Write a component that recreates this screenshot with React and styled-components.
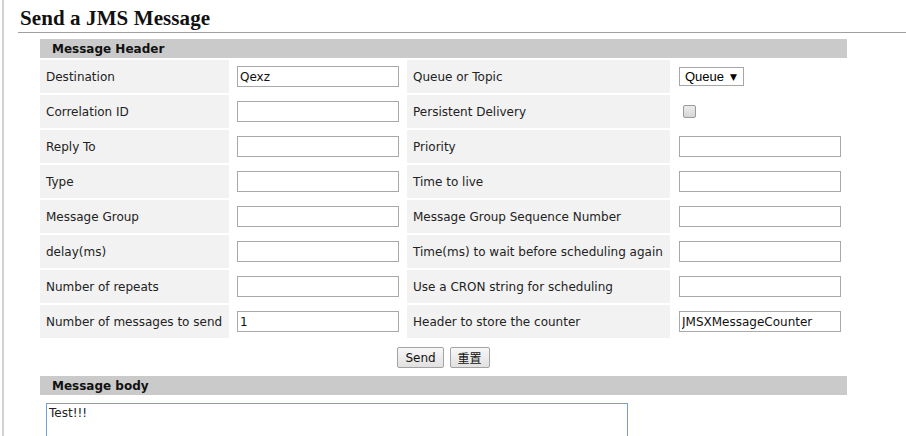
import React from "react";
import styled, { createGlobalStyle } from "styled-components";

const Global = createGlobalStyle`
  html, body { margin: 0; padding: 0; overflow: hidden; background: #fff; }
  body { font-family: "DejaVu Sans", Verdana, sans-serif; font-size: 12px; color: #222; }
`;

const Page = styled.div`
  padding-left: 2px;
  height: 436px;
  overflow: hidden;
`;

const Frame = styled.div`
  border-left: 2px solid #d2d2d2;
  height: 100%;
  padding-left: 14px;
`;

const Title = styled.h1`
  margin: 0;
  padding: 6px 0 2px 2px;
  font-family: "Liberation Serif", Georgia, serif;
  font-weight: bold;
  font-size: 21px;
  letter-spacing: 0.1px;
  line-height: 24px;
  color: #111;
  border-bottom: 1px solid #a0a0a0;
`;

const Section = styled.div`
  margin-left: 20px;
  width: 807px;
  padding: 2px;
  display: grid;
  grid-template-columns: 189px 174px 263px 175px;
  gap: 2px;
  margin-top: ${(p) => p.$top || 0}px;
`;

const Bar = styled.div`
  grid-column: 1 / -1;
  height: 19px;
  background: #cacaca;
  padding-left: 12px;
  font-weight: bold;
  font-size: 12px;
  line-height: 20px;
  color: #111;
`;

const Label = styled.div`
  height: 33px;
  background: #f2f2f2;
  display: flex;
  align-items: center;
  padding-left: 6px;
  white-space: nowrap;
`;

const Value = styled.div`
  height: 33px;
  display: flex;
  align-items: center;
  padding-left: ${(p) => p.$pad || 6}px;
`;

const TextInput = styled.input`
  box-sizing: border-box;
  width: 162px;
  height: 21px;
  border: 1px solid #a9a9a9;
  padding: 0 2px;
  margin: 0;
  font-family: "DejaVu Sans", Verdana, sans-serif;
  font-size: 12px;
  color: #111;
  outline: none;
`;

const SelectBox = styled.div`
  box-sizing: border-box;
  display: flex;
  align-items: center;
  width: 65px;
  height: 19px;
  border: 1px solid #a6a6a6;
  padding: 0 6px 0 5px;
  background: #fff;
`;

const NativeSelect = styled.select`
  appearance: none;
  border: none;
  padding: 0;
  margin: 0;
  flex: 1;
  background: transparent;
  font-family: "Liberation Sans", Arial, sans-serif;
  font-size: 13px;
  color: #000;
  outline: none;
`;

const Arrow = styled.span`
  font-size: 9px;
  color: #000;
  font-family: "DejaVu Sans", sans-serif;
`;

const Check = styled.input`
  appearance: none;
  box-sizing: border-box;
  width: 13px;
  height: 13px;
  margin: 3px 3px 3px 4px;
  border: 1px solid #9a9a9a;
  border-radius: 2px;
  background: linear-gradient(#ececec, #d6d6d6);
`;

const Actions = styled.div`
  grid-column: 1 / -1;
  height: 33px;
  display: flex;
  align-items: center;
  justify-content: center;
  gap: 6px;
  padding-top: 2px;
  box-sizing: border-box;
`;

const Button = styled.button`
  box-sizing: border-box;
  height: 21px;
  padding: 0 ${(p) => p.$px || 7}px;
  border: 1px solid #a3a3a3;
  border-radius: 2px;
  background: linear-gradient(#f7f7f7, #e1e1e1);
  font-family: "DejaVu Sans", "Noto Sans CJK SC", sans-serif;
  font-size: 12px;
  color: #111;
`;

const BodyCell = styled.div`
  grid-column: 1 / -1;
  padding: 6px 0 0 6px;
`;

const TextArea = styled.textarea`
  box-sizing: border-box;
  width: 582px;
  height: 80px;
  border: 1px solid #6f9fe2;
  padding: 2px 2px;
  margin: 0;
  font-family: "DejaVu Sans", Verdana, sans-serif;
  font-size: 12px;
  color: #222;
  resize: none;
  outline: none;
`;

const rows = [
  ["Destination", { value: "Qexz" }, "Queue or Topic", "select"],
  ["Correlation ID", {}, "Persistent Delivery", "check"],
  ["Reply To", {}, "Priority", {}],
  ["Type", {}, "Time to live", {}],
  ["Message Group", {}, "Message Group Sequence Number", {}],
  ["delay(ms)", {}, "Time(ms) to wait before scheduling again", {}],
  ["Number of repeats", {}, "Use a CRON string for scheduling", {}],
  ["Number of messages to send", { value: "1" }, "Header to store the counter", { value: "JMSXMessageCounter" }],
];

function Right({ kind }) {
  if (kind === "select") {
    return (
      <SelectBox>
        <NativeSelect defaultValue="queue">
          <option value="queue">Queue</option>
          <option value="topic">Topic</option>
        </NativeSelect>
        <Arrow>▼</Arrow>
      </SelectBox>
    );
  }
  if (kind === "check") return <Check type="checkbox" />;
  return <TextInput defaultValue={kind.value || ""} />;
}

export default function App() {
  return (
    <>
      <Global />
      <Page>
        <Frame>
          <Title>Send a JMS Message</Title>
          <Section $top={4}>
            <Bar>Message Header</Bar>
            {rows.map(([l1, v1, l2, v2]) => (
              <React.Fragment key={l1}>
                <Label>{l1}</Label>
                <Value>
                  <TextInput defaultValue={v1.value || ""} />
                </Value>
                <Label>{l2}</Label>
                <Value $pad={7}>
                  <Right kind={v2} />
                </Value>
              </React.Fragment>
            ))}
            <Actions>
              <Button>Send</Button>
              <Button $px={7}>重置</Button>
            </Actions>
          </Section>
          <Section $top={-1}>
            <Bar>Message body</Bar>
            <BodyCell>
              <TextArea defaultValue="Test!!!" />
            </BodyCell>
          </Section>
        </Frame>
      </Page>
    </>
  );
}
